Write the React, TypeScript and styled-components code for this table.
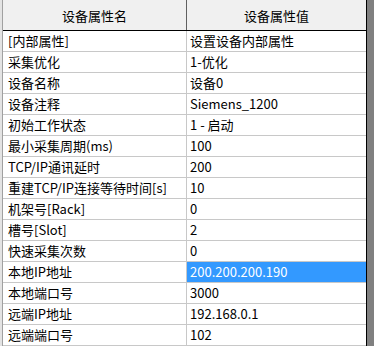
import styled, { createGlobalStyle } from "styled-components";

const GlobalStyle = createGlobalStyle`
  html, body {
    margin: 0;
    padding: 0;
    background: #ffffff;
  }
  body {
    font-family: "Noto Sans CJK SC", "Noto Sans", sans-serif;
  }
`;

const Frame = styled.div`
  display: flex;
  width: 374px;
  height: 346px;
  overflow: hidden;
`;

const LeftEdge = styled.div`
  width: 2px;
  background: #e3e3e3;
  border-right: 1px solid #a0a0a0;
`;

const Gutter = styled.div`
  flex: 1;
  background: #808080;
`;

const Table = styled.div`
  width: 363px;
  border-right: 1px solid #000000;
  background: #ffffff;
  display: flex;
  flex-direction: column;
`;

const HeaderRow = styled.div`
  display: grid;
  grid-template-columns: 184px 179px;
  height: 31px;
  background: #f0f0f0;
  border-bottom: 1px solid #000000;
`;

const HeaderCell = styled.div<{ $divider?: boolean }>`
  display: flex;
  align-items: center;
  justify-content: center;
  font-size: 13px;
  color: #000000;
  border-right: ${(p) => (p.$divider ? "1px solid #606060" : "none")};
`;

const Row = styled.div`
  display: grid;
  grid-template-columns: 184px 179px;
  height: 20px;
  flex-shrink: 0;
  border-bottom: 1px solid #c8c8c8;
`;

const Cell = styled.div<{ $divider?: boolean; $selected?: boolean; $pad: number }>`
  display: flex;
  align-items: center;
  padding-left: ${(p) => p.$pad}px;
  font-size: 13px;
  line-height: 20px;
  white-space: nowrap;
  overflow: hidden;
  color: ${(p) => (p.$selected ? "#ffffff" : "#000000")};
  background: ${(p) => (p.$selected ? "#3399ff" : "transparent")};
  border-right: ${(p) => (p.$divider ? "1px solid #c8c8c8" : "none")};
`;

type Prop = { name: string; value: string; selected?: boolean };

const props: Prop[] = [
  { name: "[内部属性]", value: "设置设备内部属性" },
  { name: "采集优化", value: "1-优化" },
  { name: "设备名称", value: "设备0" },
  { name: "设备注释", value: "Siemens_1200" },
  { name: "初始工作状态", value: "1 - 启动" },
  { name: "最小采集周期(ms)", value: "100" },
  { name: "TCP/IP通讯延时", value: "200" },
  { name: "重建TCP/IP连接等待时间[s]", value: "10" },
  { name: "机架号[Rack]", value: "0" },
  { name: "槽号[Slot]", value: "2" },
  { name: "快速采集次数", value: "0" },
  { name: "本地IP地址", value: "200.200.200.190", selected: true },
  { name: "本地端口号", value: "3000" },
  { name: "远端IP地址", value: "192.168.0.1" },
  { name: "远端端口号", value: "102" },
];

export default function App() {
  return (
    <>
      <GlobalStyle />
      <Frame>
        <LeftEdge />
        <Table>
          <HeaderRow>
            <HeaderCell $divider>设备属性名</HeaderCell>
            <HeaderCell>设备属性值</HeaderCell>
          </HeaderRow>
          {props.map((p) => (
            <Row key={p.name}>
              <Cell $divider $pad={5}>
                {p.name}
              </Cell>
              <Cell $selected={p.selected} $pad={3}>
                {p.value}
              </Cell>
            </Row>
          ))}
        </Table>
        <Gutter />
      </Frame>
    </>
  );
}
